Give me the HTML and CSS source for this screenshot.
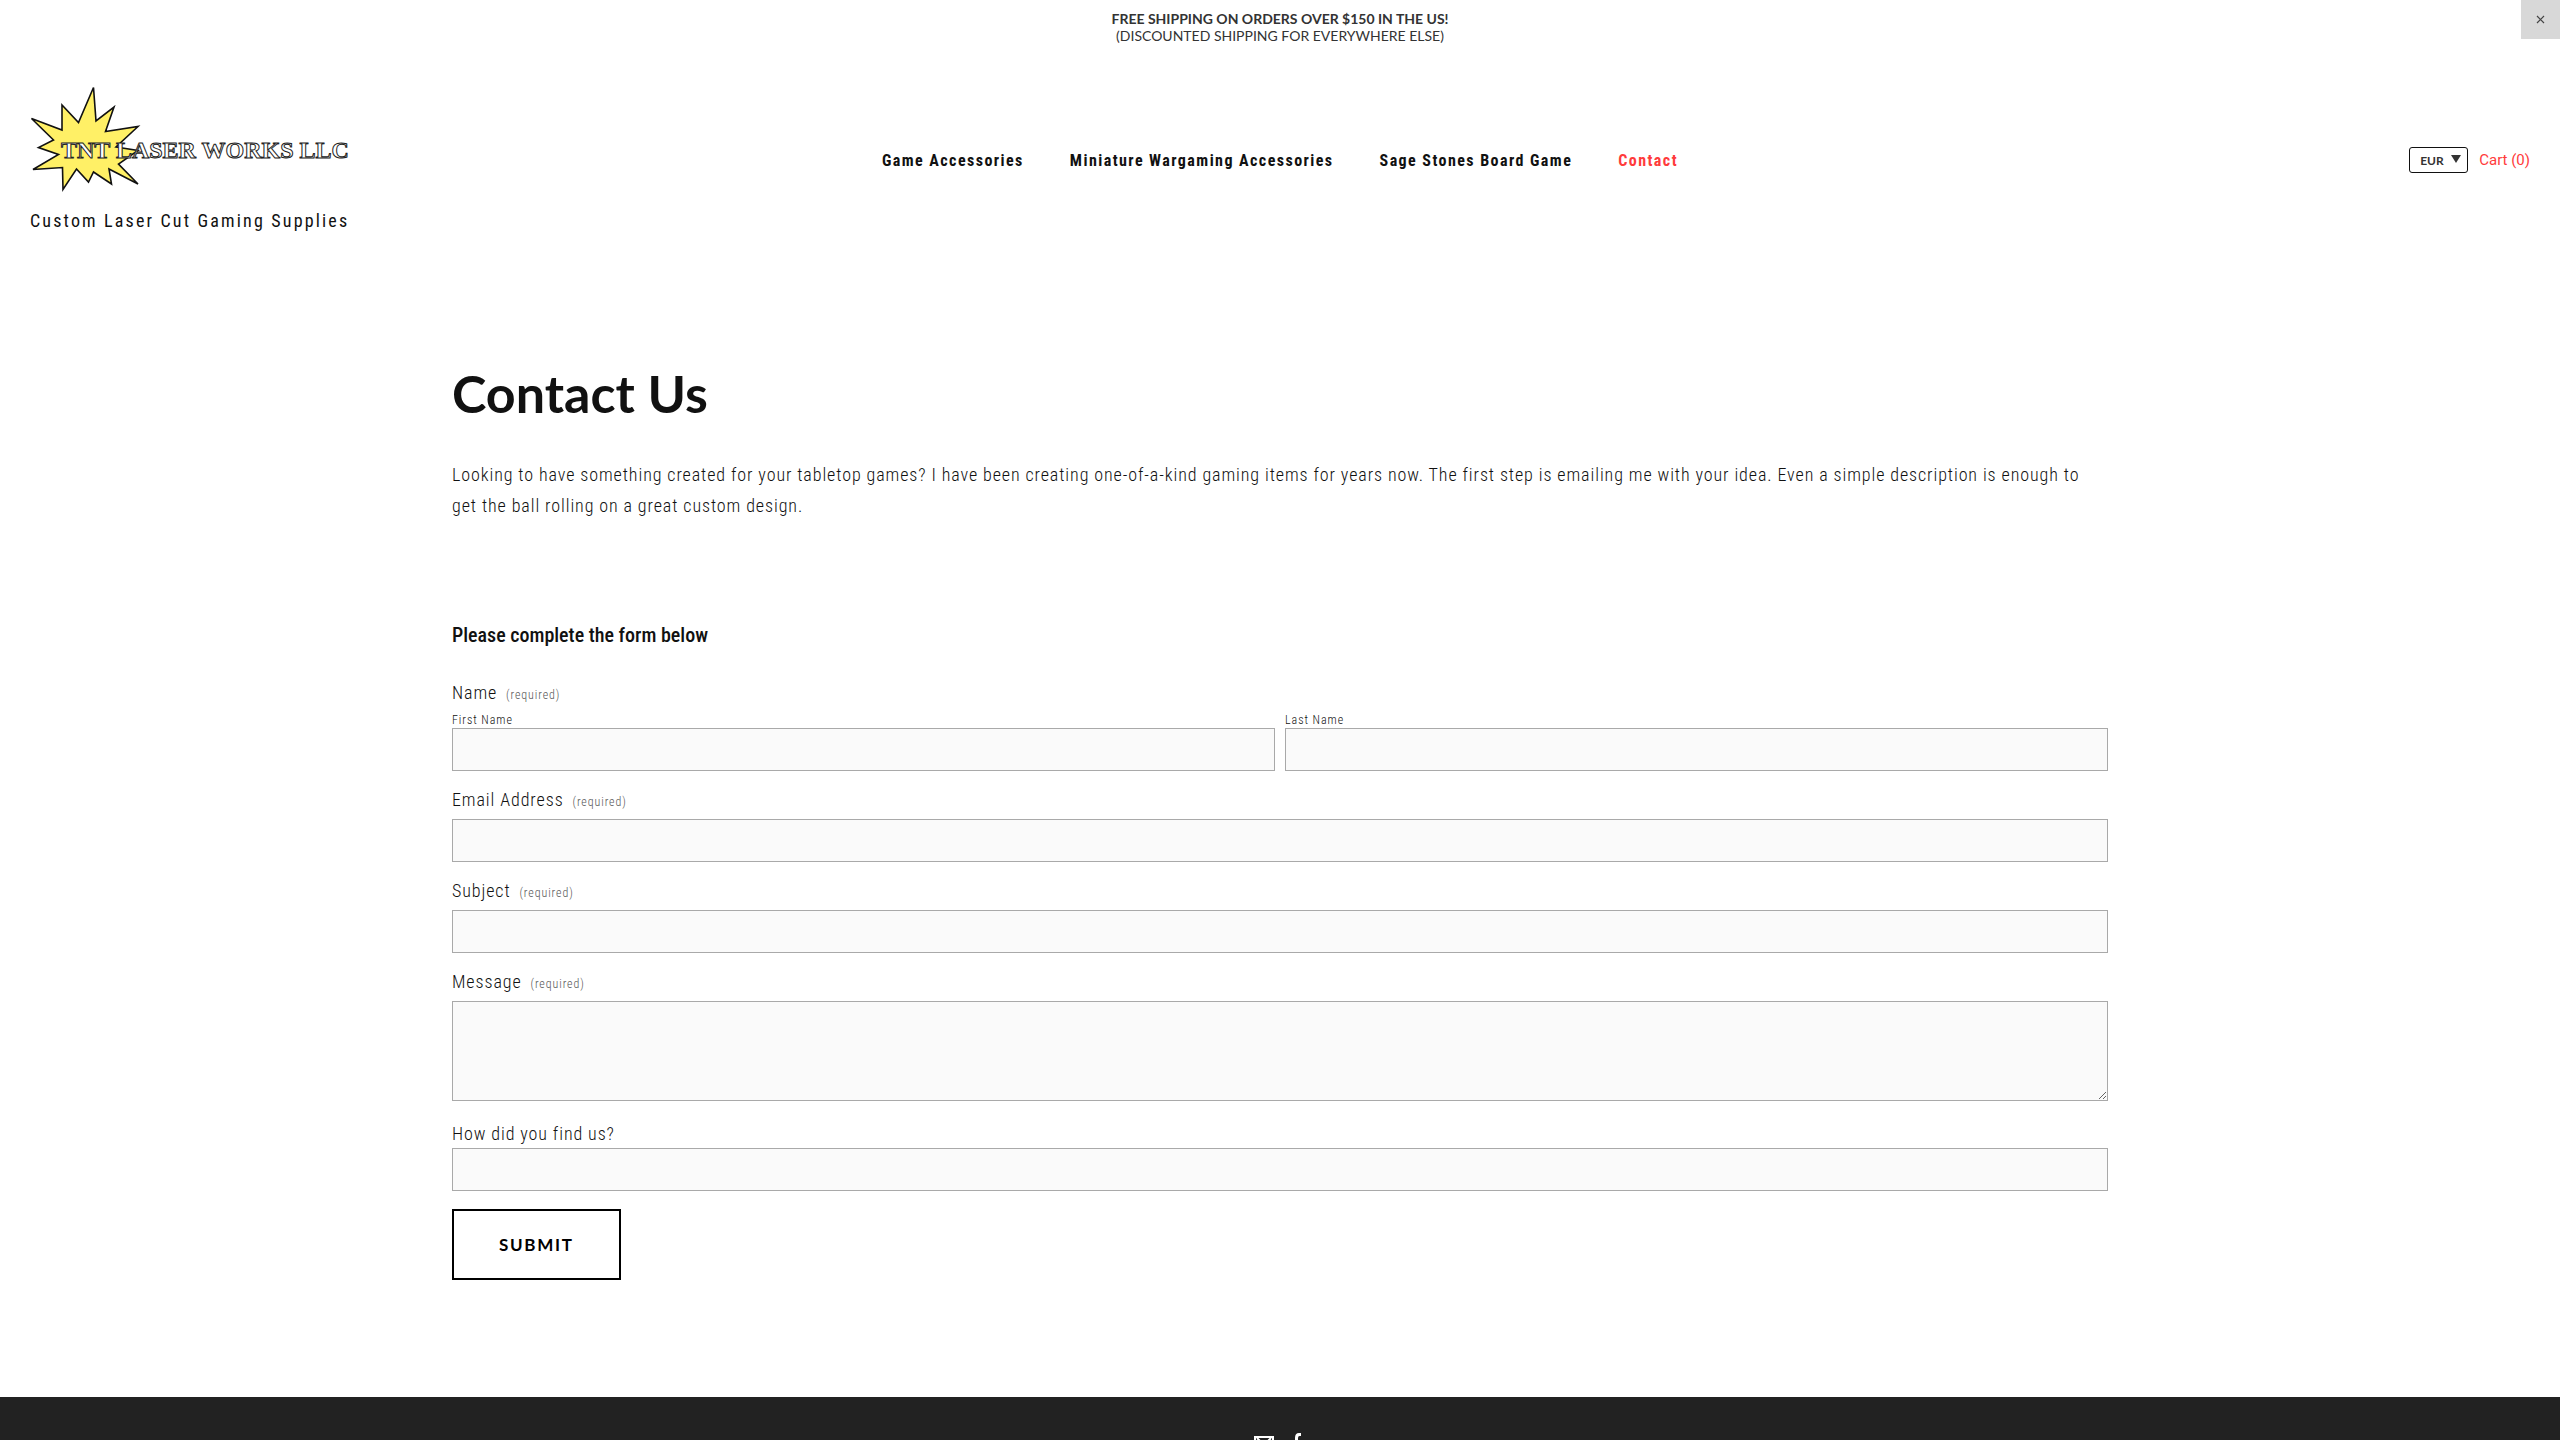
FILE: index.html
```html
<!DOCTYPE html>
<html lang="en">
<head>
<meta charset="utf-8">
<title>Contact Us — TNT Laser Works LLC</title>
<meta name="viewport" content="width=device-width, initial-scale=1">
<link rel="stylesheet" href="styles.css">
</head>
<body>
<div class="announcement">
  <p class="announcement-text"><strong>FREE SHIPPING ON ORDERS OVER $150 IN THE US!</strong><br>(DISCOUNTED SHIPPING FOR EVERYWHERE ELSE)</p>
  <button class="announcement-close" type="button" aria-label="Close">
    <svg width="9" height="9" viewBox="0 0 9 9"><path d="M1 1l7 7M8 1l-7 7" fill="none" stroke="#444" stroke-width="1.2"/></svg>
  </button>
</div>
<header class="header">
  <a class="brand" href="#">
    <svg class="logo" width="322" height="106" viewBox="30 86 322 106" role="img" aria-label="TNT Laser Works LLC">
      <path d="M31.5 118.500L62 130V105L78.500 122.500L93.500 87.500L96 121L114 107L105.500 131.500L138 126.500L116 147L138 150.500L118.500 164L138 184L109 169L111.500 184L93.500 172L88.500 182L76.500 169L63 189.500L62.500 167.500L33 169.500L58.500 154.500L38.500 147.500L53.500 140Z" fill="#fff066" stroke="#111" stroke-width="1.600"/>
      <text class="logo-text" x="61" y="158">TNT LASER WORKS LLC</text>
    </svg>
    <span class="tagline">Custom Laser Cut Gaming Supplies</span>
  </a>
  <nav class="nav">
    <a href="#">Game Accessories</a>
    <a href="#">Miniature Wargaming Accessories</a>
    <a href="#">Sage Stones Board Game</a>
    <a class="active" href="#">Contact</a>
  </nav>
  <div class="shop">
    <span class="currency">
      <select class="currency-select" aria-label="Currency"><option>EUR</option><option>USD</option></select>
      <svg class="currency-arrow" width="10" height="8" viewBox="0 0 10 8"><path d="M0 0H10L5 8Z" fill="#333"/></svg>
    </span>
    <a class="cart" href="#">Cart (0)</a>
  </div>
</header>
<main class="content">
  <h1>Contact Us</h1>
  <p class="intro">Looking to have something created for your tabletop games? I have been creating one-of-a-kind gaming items for years now. The first step is emailing me with your idea. Even a simple description is enough to get the ball rolling on a great custom design.</p>
  <form class="form">
    <h2>Please complete the form below</h2>
    <fieldset class="field">
      <legend class="label">Name <span class="required">(required)</span></legend>
      <div class="name-row">
        <label class="sub-label">First Name<input type="text"></label>
        <label class="sub-label">Last Name<input type="text"></label>
      </div>
    </fieldset>
    <div class="field">
      <label class="label" for="email">Email Address <span class="required">(required)</span></label>
      <input id="email" type="email">
    </div>
    <div class="field">
      <label class="label" for="subject">Subject <span class="required">(required)</span></label>
      <input id="subject" type="text">
    </div>
    <div class="field">
      <label class="label" for="message">Message <span class="required">(required)</span></label>
      <textarea id="message"></textarea>
    </div>
    <div class="field">
      <label class="label label-tight" for="source">How did you find us?</label>
      <input id="source" type="text">
    </div>
    <button class="submit" type="submit">SUBMIT</button>
  </form>
</main>
<footer class="footer">
  <a href="#" aria-label="Email"><svg width="20" height="16" viewBox="0 0 20 16"><path d="M1 1H19V15H1ZM3 2L10 9L17 2" fill="none" stroke="#fff" stroke-width="2"/></svg></a>
  <a href="#" aria-label="Facebook"><svg width="14" height="20" viewBox="0 0 14 20"><path d="M3 20V11H0V7H3V5Q3 0 7 0H9V3H7.500Q6 3 6 5V7H9L8.500 11H6V20Z" fill="#fff"/></svg></a>
</footer>
</body>
</html>
```
FILE: styles.css
```css
* { box-sizing: border-box; }

body {
  margin: 0;
  background: #fff;
  color: #111;
  font-family: "Roboto Condensed", Roboto, sans-serif;
  font-size: 18px;
}

a { color: inherit; text-decoration: none; }

.announcement { position: relative; padding: 10px 48px; }

.announcement-text {
  margin: 0;
  color: #333;
  font-family: Lato, sans-serif;
  font-size: 14px;
  line-height: 17px;
  text-align: center;
}

.announcement-close {
  position: absolute;
  top: 0;
  right: 0;
  width: 39px;
  height: 39px;
  padding: 0;
  border: 0;
  background: #d8d8d8;
}

.header {
  display: grid;
  grid-template-columns: 1fr auto 1fr;
  align-items: center;
  padding: 32px 30px 0;
}

.brand { display: flex; flex-direction: column; align-items: flex-start; gap: 16px; }
.logo { display: block; overflow: visible; }

.logo-text {
  font-family: "Liberation Serif", serif;
  font-size: 24px;
  font-weight: 700;
  fill: #fff;
  stroke: #222;
  stroke-width: 1px;
}

.tagline { font-size: 18px; line-height: 26px; letter-spacing: 0.12em; }

.nav {
  display: flex;
  gap: 46px;
  font-size: 16px;
  font-weight: 700;
  letter-spacing: 0.09em;
}

.active { color: #ff3b3b; }

.shop { display: flex; justify-content: flex-end; align-items: center; gap: 11px; }
.currency { position: relative; }

.currency-select {
  display: block;
  width: 59px;
  height: 26px;
  padding: 0 10px;
  border: 1px solid #111;
  border-radius: 3px;
  appearance: none;
  background: #fff;
  color: #333;
  font: 700 12px Lato, sans-serif;
}

.currency-arrow { position: absolute; top: 8px; right: 7px; pointer-events: none; }
.cart { color: #ff3b3b; font-family: Roboto, sans-serif; font-size: 15px; }

.content { max-width: 1716px; margin: 0 auto; padding: 128px 30px 117px; }

h1 {
  margin: 0;
  font-family: Lato, sans-serif;
  font-size: 52px;
  line-height: 62px;
}

.intro { margin: 35px 0 0; font-weight: 300; line-height: 31px; letter-spacing: 0.05em; }
.form { margin-top: 101px; }
h2 { margin: 0 0 32px; font-size: 20px; font-weight: 500; line-height: 27px; }
.field { margin: 0 0 17px; padding: 0; border: 0; }

.label {
  display: block;
  padding: 0 0 8px;
  font-weight: 300;
  line-height: 23px;
  letter-spacing: 0.05em;
}

.label-tight { padding-bottom: 3px; margin-top: 21px; }
.required { margin-left: 4px; color: #555; font-size: 12px; line-height: 1; }
.name-row { display: grid; grid-template-columns: 1fr 1fr; gap: 10px; }
.sub-label { font-size: 12px; font-weight: 300; line-height: 16px; letter-spacing: 0.08em; }

input, textarea {
  display: block;
  width: 100%;
  height: 43px;
  margin: 0;
  padding: 12px;
  border: 1px solid #a9a9a9;
  background: #fafafa;
}

textarea { height: 100px; }

.submit {
  margin-top: 1px;
  padding: 22px 45px;
  border: 2px solid #000;
  background: #fff;
  color: #000;
  font-family: Lato, sans-serif;
  font-size: 17px;
  font-weight: 700;
  line-height: 23px;
  letter-spacing: 0.1em;
}

.footer { display: flex; justify-content: center; align-items: center; gap: 18px; padding: 36px 30px 60px; background: #222; }
```
